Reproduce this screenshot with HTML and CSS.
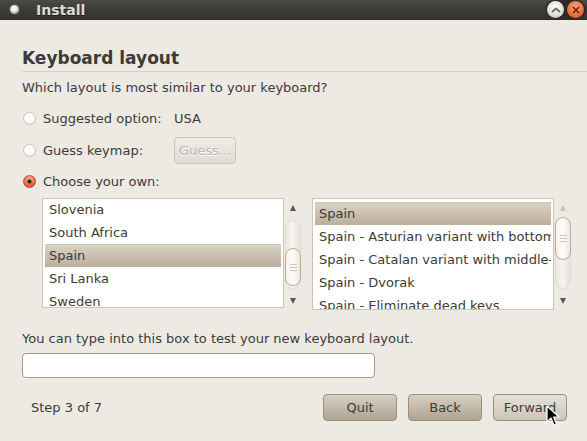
FILE: index.html
```html
<!DOCTYPE html>
<html>
<head>
<meta charset="utf-8">
<link rel="stylesheet" href="styles.css">
</head>
<body>
<div class="window">
  <div class="titlebar">
    <span class="app-icon"></span>
    <span class="title">Install</span>
    <div class="wm-buttons">
      <span class="wm-btn wm-max"><svg width="10" height="6" viewBox="0 0 10 6"><path d="M1 5 L5 1.5 L9 5" fill="none" stroke="#6d6a64" stroke-width="1.8"/></svg></span>
      <span class="wm-btn wm-close"><svg width="8" height="8" viewBox="0 0 8 8"><path d="M1 1 L7 7 M7 1 L1 7" stroke="#5a2a1a" stroke-width="1.6"/></svg></span>
    </div>
  </div>
  <div class="content">
    <h1 class="heading">Keyboard layout</h1>
    <div class="sep"></div>
    <p class="question">Which layout is most similar to your keyboard?</p>
    <div class="radio-row r1">
      <span class="radio"></span><span class="label lbl-w">Suggested option:</span><span class="label">USA</span>
    </div>
    <div class="radio-row r2">
      <span class="radio"></span><span class="label lbl-w">Guess keymap:</span><span class="guess-btn">Guess...</span>
    </div>
    <div class="radio-row r3">
      <span class="radio checked"></span><span class="label">Choose your own:</span>
    </div>
    <div class="lists">
      <div class="list-wrap left">
        <div class="list">
          <div class="rows rows-left">
            <div class="row">Slovenia</div>
            <div class="row">South Africa</div>
            <div class="row sel">Spain</div>
            <div class="row">Sri Lanka</div>
            <div class="row">Sweden</div>
          </div>
        </div>
        <div class="scrollbar">
          <span class="arrow up"></span>
          <div class="trough t-left"><div class="thumb th-left"><span class="grip"></span></div></div>
          <span class="arrow down"></span>
        </div>
      </div>
      <div class="list-wrap right">
        <div class="list">
          <div class="rows rows-right">
            <div class="row sel">Spain</div>
            <div class="row">Spain - Asturian variant with bottom-dot H and bottom-dot L</div>
            <div class="row">Spain - Catalan variant with middle-dot L</div>
            <div class="row">Spain - Dvorak</div>
            <div class="row">Spain - Eliminate dead keys</div>
          </div>
        </div>
        <div class="scrollbar">
          <span class="arrow up dim"></span>
          <div class="trough t-right"><div class="thumb th-right"><span class="grip"></span></div></div>
          <span class="arrow down"></span>
        </div>
      </div>
    </div>
    <p class="hint">You can type into this box to test your new keyboard layout.</p>
    <div class="testbox"></div>
    <div class="footer">
      <span class="step">Step 3 of 7</span>
      <div class="buttons">
        <span class="btn">Quit</span>
        <span class="btn">Back</span>
        <span class="btn hover">Forward
          <svg class="cursor" width="14" height="22" viewBox="0 0 14 22"><path d="M1 1 L1 17 L5 13 L8 20 L10.5 19 L7.5 12 L13 12 Z" fill="#000" stroke="#fff" stroke-width="1.2" stroke-linejoin="round"/></svg>
        </span>
      </div>
    </div>
  </div>
</div>
</body>
</html>
```

FILE: styles.css
```css
* { box-sizing: border-box; }
html, body { margin: 0; padding: 0; }
body {
  width: 587px; height: 441px; overflow: hidden;
  background: #edeae4;
  font-family: "DejaVu Sans", sans-serif;
  font-size: 13px;
  color: #3c3b37;
}
.window { width: 587px; height: 441px; display: flex; flex-direction: column; }
.titlebar {
  height: 20px; flex: none;
  background: linear-gradient(#4a4944, #3a3935 60%, #33322f);
  display: flex; align-items: center;
  border-bottom: 1px solid #2c2b28;
}
.app-icon {
  width: 11px; height: 11px; border-radius: 50%;
  margin-left: 9px;
  border: 1px solid #55534e;
  background: radial-gradient(circle at 45% 40%, #f4f4f2 0 30%, #b9b7b2 60%, #6e6c67 100%);
}
.title {
  margin-left: 16px; font-weight: bold; font-size: 14px; color: #dfdbd2;
  text-shadow: 0 1px 0 #1f1e1c;
}
.wm-buttons {
  margin-left: auto; margin-right: 1px;
  display: flex; gap: 3px; align-items: center;
  padding: 1px 2px; border-radius: 10px;
  background: #2c2b28;
}
.wm-btn {
  width: 17px; height: 17px; border-radius: 50%;
  display: flex; align-items: center; justify-content: center;
}
.wm-max { background: radial-gradient(circle at 50% 35%, #ffffff, #d8d6d1 70%, #aaa7a0); }
.wm-close { background: radial-gradient(circle at 50% 35%, #fba37e, #f06a33 60%, #d04a18); }

.content { padding: 0 20px 0 22px; display: flex; flex-direction: column; }
.heading { font-size: 17px; font-weight: bold; margin: 28px 0 0; line-height: 20px; color: #3c3b37; }
.sep { height: 1px; background: #d8d2c8; margin: 3px -20px 0 0; }
.question { margin: 7px 0 0; line-height: 18px; }
.radio-row { display: flex; align-items: center; height: 26px; }
.r1 { margin-top: 8px; }
.r2 { margin-top: 6px; }
.r3 { margin-top: 5px; }
.radio {
  width: 13px; height: 13px; border-radius: 50%; flex: none;
  margin: 0 7px 0 1px;
  border: 1px solid #c9c2b6;
  background: radial-gradient(circle at 50% 35%, #ffffff 40%, #ece9e3);
}
.radio.checked {
  border-color: #c14a2e;
  background: radial-gradient(circle, #2a2a2a 0 1.8px, transparent 2.4px), radial-gradient(circle at 50% 30%, #fbb49a, #ea5a38 70%, #d8472a);
}
.lbl-w { width: 131px; }
.guess-btn {
  width: 62px; height: 27px; display: flex; align-items: center; justify-content: center;
  border: 1px solid #cdc4b6; border-radius: 4px;
  background: linear-gradient(#efece7, #e0dbd3);
  color: #bcb6ad; text-shadow: 0 1px 0 #fff;
}
.lists { display: flex; margin: 4px 0 0 20px; gap: 11px; }
.list-wrap { display: flex; }
.list {
  width: 242px; height: 110px; overflow: hidden;
  border: 1px solid #cfc5b4; background: #fff;
  padding: 1px 2px;
}
.right .list { height: 112px; }
.rows-left { margin-top: -2px; }
.rows-right { margin-top: 2px; }
.row {
  height: 23px; line-height: 23px; padding-left: 4px;
  white-space: nowrap; overflow: hidden;
}
.row.sel {
  background: linear-gradient(#dad1c4, #bbae9b);
  border-top: 1px solid #cfc6b8;
  line-height: 21px; height: 23px;
}
.scrollbar { width: 16px; margin-left: 1px; display: flex; flex-direction: column; align-items: center; position: relative; height: 110px; }
.arrow { width: 0; height: 0; border-left: 3.5px solid transparent; border-right: 3.5px solid transparent; }
.arrow.up { border-bottom: 6px solid #58554f; margin-top: 7px; }
.arrow.up.dim { border-bottom-color: #c8c3ba; }
.arrow.down { border-top: 6px solid #58554f; margin-top: auto; margin-bottom: 4px; }
.trough {
  position: absolute; left: 0; width: 16px; border-radius: 8px;
  background: linear-gradient(90deg, #ebe7e0, #f6f4f1 50%, #e5e0d8);
  border: 1px solid #e2ddd5;
}
.t-left { top: 22px; height: 69px; }
.t-right { top: 19px; height: 72px; }
.thumb {
  position: absolute; left: -1px; width: 16px; border-radius: 8px;
  border: 1px solid #b9ad9a;
  background: linear-gradient(90deg, #f6f3ee, #fdfcfa 50%, #ece7df);
  display: flex; align-items: center; justify-content: center;
}
.th-left { top: 27px; height: 38px; }
.th-right { top: -1px; height: 43px; }
.grip {
  width: 7px; height: 7px;
  background: linear-gradient(#cfc7ba 0 1px, transparent 1px 3px, #cfc7ba 3px 4px, transparent 4px 6px, #cfc7ba 6px 7px);
}
.hint { margin: 20px 0 0; line-height: 18px; }
.testbox {
  width: 353px; height: 25px; margin-top: 5px;
  background: #fff; border: 1px solid #a59b8b; border-radius: 4px;
}
.footer { display: flex; align-items: center; margin-top: 15px; height: 28px; }
.step { margin-left: 9px; }
.buttons { margin-left: auto; display: flex; gap: 11px; margin-right: 0; }
.btn {
  width: 74px; height: 27px; display: flex; align-items: center; justify-content: center;
  border: 1px solid #9a8e7c; border-radius: 4px;
  background: linear-gradient(#d6cfc4, #b0a492);
  color: #3c3b37; position: relative;
}
.btn.hover { background: linear-gradient(#e7e2da, #cdc4b6); }
.cursor { position: absolute; left: 52px; top: 10px; }
```
